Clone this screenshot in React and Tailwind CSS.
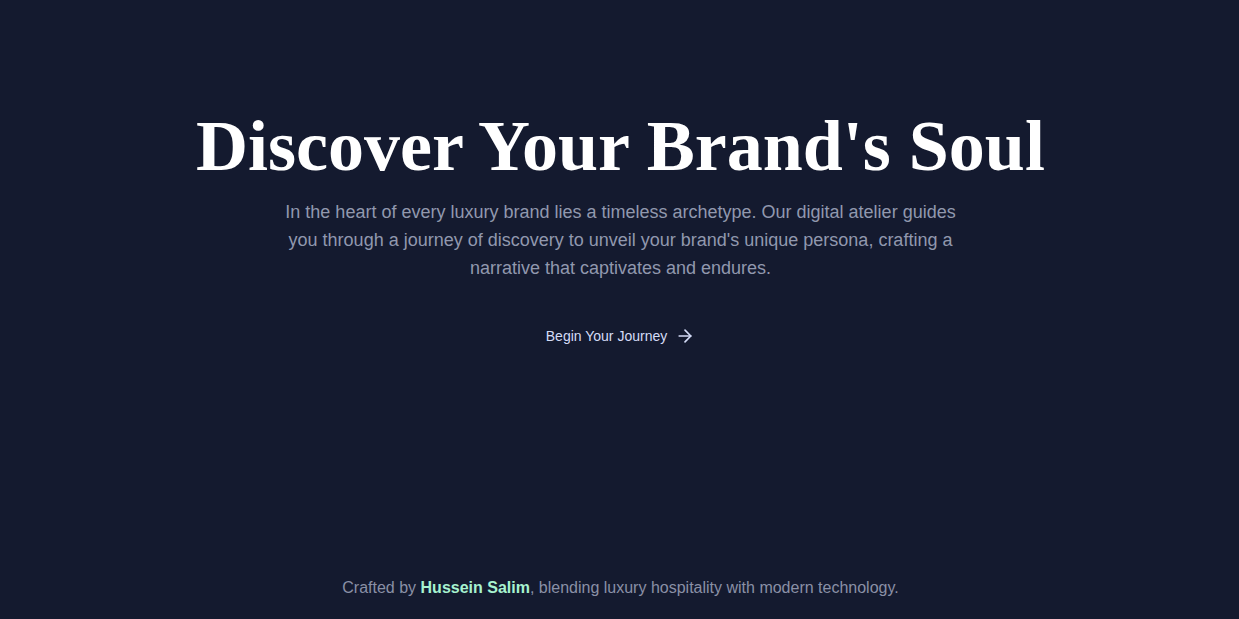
import React from "react";
import { ArrowRight } from "lucide-react";

const App = () => {
  return (
    <div className="min-h-screen h-[619px] bg-[#141a2f] pl-[2px] flex flex-col font-['Liberation_Sans',Arial,sans-serif]">
      {/* hero */}
      <main className="flex-1 flex flex-col items-center pt-[104px] px-4 text-center">
        <h1 className="font-['Liberation_Serif','Times_New_Roman',serif] font-bold text-white text-[72px] leading-[84px]">
          Discover Your Brand's Soul
        </h1>
        <p className="mt-[10px] max-w-2xl text-lg leading-7 text-[#9198ae]">
          In the heart of every luxury brand lies a timeless archetype. Our
          digital atelier guides you through a journey of discovery to unveil
          your brand's unique persona, crafting a narrative that captivates and
          endures.
        </p>
        <button className="mt-[44px] flex items-center gap-2 text-sm text-[#d4dcf7]">
          Begin Your Journey
          <ArrowRight size={20} strokeWidth={2} />
        </button>
      </main>
      <footer className="pb-[19px] text-center text-base text-[#8a90a6]">
        Crafted by{" "}
        <span className="font-bold text-[#a7f3d0]">Hussein Salim</span>,
        blending luxury hospitality with modern technology.
      </footer>
    </div>
  );
};

export default App;
